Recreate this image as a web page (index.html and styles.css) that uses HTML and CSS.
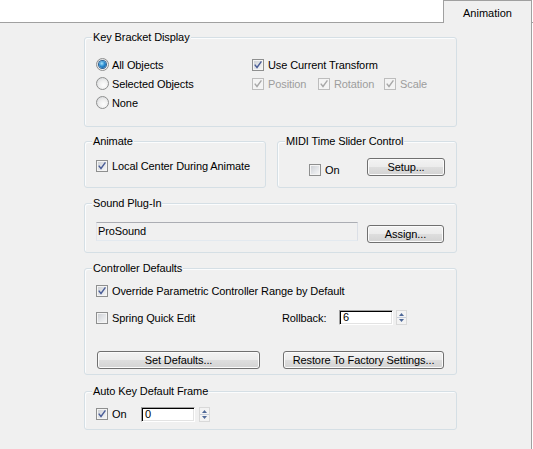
FILE: index.html
```html
<!DOCTYPE html>
<html>
<head>
<meta charset="utf-8">
<link rel="stylesheet" href="styles.css">
</head>
<body>
<div class="tabbar"><div class="tab">Animation</div></div>
<div class="panel">
  <div class="groups">
    <section class="group kbd">
      <span class="gtitle">Key Bracket Display</span>
      <div class="kbd-cols">
        <div class="col-left">
          <div class="opt"><span class="radio on"></span>All Objects</div>
          <div class="opt"><span class="radio"></span>Selected Objects</div>
          <div class="opt"><span class="radio"></span>None</div>
        </div>
        <div class="col-right">
          <div class="opt"><span class="cb"><svg viewBox="0 0 12 12" class="chk"><path d="M2.6 6.2 L4.8 9 L9.6 2.4"/></svg></span>Use Current Transform</div>
          <div class="row-three">
            <div class="opt dis w66"><span class="cb"><svg viewBox="0 0 12 12" class="chk"><path d="M2.6 6.2 L4.8 9 L9.6 2.4"/></svg></span>Position</div>
            <div class="opt dis w66"><span class="cb"><svg viewBox="0 0 12 12" class="chk"><path d="M2.6 6.2 L4.8 9 L9.6 2.4"/></svg></span>Rotation</div>
            <div class="opt dis"><span class="cb"><svg viewBox="0 0 12 12" class="chk"><path d="M2.6 6.2 L4.8 9 L9.6 2.4"/></svg></span>Scale</div>
          </div>
        </div>
      </div>
    </section>

    <div class="pair">
      <section class="group animate">
        <span class="gtitle">Animate</span>
        <div class="opt"><span class="cb"><svg viewBox="0 0 12 12" class="chk"><path d="M2.6 6.2 L4.8 9 L9.6 2.4"/></svg></span>Local Center During Animate</div>
      </section>
      <section class="group midi">
        <span class="gtitle">MIDI Time Slider Control</span>
        <div class="midi-row">
          <div class="opt midi-on"><span class="cb"></span>On</div>
          <div class="btn btn-setup">Setup...</div>
        </div>
      </section>
    </div>

    <section class="group sound">
      <span class="gtitle">Sound Plug-In</span>
      <div class="sound-row">
        <div class="field-ro">ProSound</div>
        <div class="btn btn-assign">Assign...</div>
      </div>
    </section>

    <section class="group ctrl">
      <span class="gtitle">Controller Defaults</span>
      <div class="opt"><span class="cb"><svg viewBox="0 0 12 12" class="chk"><path d="M2.6 6.2 L4.8 9 L9.6 2.4"/></svg></span>Override Parametric Controller Range by Default</div>
      <div class="ctrl-row2">
        <div class="opt spring"><span class="cb"></span>Spring Quick Edit</div>
        <div class="rb-label">Rollback:</div>
        <div class="num rb-field">6</div>
        <span class="spin"><svg viewBox="0 0 11 15" width="11" height="15"><rect x="0.5" y="0.5" width="10" height="14" fill="#f3f3f3" stroke="#d9d9d9"/><path d="M3 6 L5.5 3 L8 6 Z" fill="#4e6898"/><line x1="1" y1="7.5" x2="10" y2="7.5" stroke="#c8cfdc"/><path d="M3 9 L8 9 L5.5 12 Z" fill="#4e6898"/></svg></span>
      </div>
      <div class="ctrl-btns">
        <div class="btn btn-set">Set Defaults...</div>
        <div class="btn btn-restore">Restore To Factory Settings...</div>
      </div>
    </section>

    <section class="group autokey">
      <span class="gtitle">Auto Key Default Frame</span>
      <div class="auto-row">
        <div class="opt auto-on"><span class="cb"><svg viewBox="0 0 12 12" class="chk"><path d="M2.6 6.2 L4.8 9 L9.6 2.4"/></svg></span>On</div>
        <div class="num auto-field">0</div>
        <span class="spin"><svg viewBox="0 0 11 15" width="11" height="15"><rect x="0.5" y="0.5" width="10" height="14" fill="#f3f3f3" stroke="#d9d9d9"/><path d="M3 6 L5.5 3 L8 6 Z" fill="#4e6898"/><line x1="1" y1="7.5" x2="10" y2="7.5" stroke="#c8cfdc"/><path d="M3 9 L8 9 L5.5 12 Z" fill="#4e6898"/></svg></span>
      </div>
    </section>
  </div>
</div>
</body>
</html>
```
FILE: styles.css
```css
* { box-sizing: border-box; }
html, body { margin: 0; padding: 0; }
body {
  width: 533px;
  height: 449px;
  overflow: hidden;
  background: #ffffff;
  font-family: "Liberation Sans", Arial, sans-serif;
  font-size: 11px;
  letter-spacing: -0.1px;
  color: #000;
}

.tabbar {
  height: 23px;
  border-bottom: 1px solid #a0a0a0;
  display: flex;
  align-items: flex-start;
}
.tab {
  margin-left: 443px;
  width: 89px;
  height: 23px;
  background: #f0f0f0;
  border: 1px solid #a0a0a0;
  border-bottom: none;
  display: flex;
  align-items: center;
  justify-content: center;
  padding-top: 1px;
  letter-spacing: 0;
}

.panel {
  width: 532px;
  height: 426px;
  background: #f0f0f0;
  border-right: 1px solid #a0a0a0;
}
.groups {
  padding-top: 14px;
  margin-left: 84px;
  width: 373px;
  display: flex;
  flex-direction: column;
}

.group {
  position: relative;
  border: 1px solid #d5dfe5;
  border-radius: 3px;
  box-shadow: inset 1px 1px 0 #fbfcfd;
  padding-left: 11px;
}
.gtitle {
  position: absolute;
  top: -7px;
  left: 7px;
  padding: 0 1px;
  line-height: 13px;
  background: #f0f0f0;
  white-space: nowrap;
}

.opt {
  display: flex;
  align-items: center;
  height: 19px;
  white-space: nowrap;
}
.opt.dis { color: #9d9d9d; }
.w66 { width: 66px; }

.radio {
  width: 13px;
  height: 13px;
  border-radius: 50%;
  border: 1px solid #8e8f8f;
  background: radial-gradient(circle at 60% 65%, #fdfdfd 0%, #efefef 45%, #cfd2d5 100%);
  margin-right: 3px;
  display: flex;
  align-items: center;
  justify-content: center;
  flex: none;
}
.radio.on::after {
  content: "";
  width: 7px;
  height: 7px;
  border-radius: 50%;
  background: radial-gradient(circle at 40% 35%, #a9e4fb 0%, #2b8dd2 45%, #0c4a86 100%);
  box-shadow: 0 0 0 1px #2a5f93;
}

.cb {
  width: 12px;
  height: 12px;
  border: 1px solid #8e8f8f;
  background: linear-gradient(135deg, #c9ccd1 0%, #e4e6e9 55%, #f8f8f8 100%);
  box-shadow: inset 0 0 0 1px #f4f4f4;
  margin-right: 4px;
  flex: none;
  display: flex;
  align-items: center;
  justify-content: center;
}
.chk { width: 10px; height: 10px; }
.chk path {
  fill: none;
  stroke: #4a5d97;
  stroke-width: 1.7;
  stroke-linecap: square;
}
.dis .cb {
  border-color: #bdbdbd;
  background: #f4f4f4;
  box-shadow: none;
}
.dis .chk path { stroke: #a8a8a8; }

.btn {
  height: 18px;
  border: 1px solid #707070;
  border-radius: 3px;
  background: linear-gradient(#f3f3f3 0%, #ececec 48%, #dedede 52%, #d3d3d3 100%);
  box-shadow: inset 0 0 0 1px #fbfbfb;
  display: flex;
  align-items: center;
  justify-content: center;
  white-space: nowrap;
  flex: none;
}

/* Key Bracket Display */
.kbd { height: 90px; padding-top: 17px; }
.kbd-cols { display: flex; }
.col-left { width: 156px; }
.row-three { display: flex; }

/* Animate / MIDI */
.pair { display: flex; gap: 11px; margin-top: 14px; }
.animate { width: 182px; height: 47px; padding-top: 14px; }
.midi { width: 180px; height: 47px; padding-top: 16px; padding-left: 31px; }
.midi-row { display: flex; align-items: flex-end; height: 18px; }
.midi-on { width: 58px; height: 13px; }
.btn-setup { width: 78px; align-self: flex-start; }

/* Sound */
.sound { margin-top: 15px; height: 50px; padding-top: 18px; }
.sound-row { display: flex; align-items: flex-start; }
.field-ro {
  width: 262px;
  height: 19px;
  border: 1px solid #abadb3;
  border-color: #abadb3 #dbdfe6 #e3e9ef #e2e3ea;
  background: #f0f0f0;
  padding-left: 1px;
  line-height: 17px;
}
.btn-assign { width: 77px; margin-left: 9px; margin-top: 3px; }

/* Controller defaults */
.ctrl { margin-top: 15px; height: 107px; padding-top: 12px; }
.ctrl-row2 { display: flex; align-items: center; height: 19px; margin-top: 8px; }
.spring { width: 186px; }
.rb-label { width: 57px; }
.num {
  height: 15px;
  background: #fff;
  border-top: 1px solid #a0a0a0;
  border-left: 1px solid #a0a0a0;
  border-right: 1px solid #ffffff;
  border-bottom: 1px solid #ffffff;
  box-shadow: inset 1px 1px 0 #000, inset -1px -1px 0 #e3e3e3;
  padding-left: 3px;
  line-height: 13px;
}
.rb-field { width: 54px; }
.spin { display: flex; margin-left: 3px; }
.ctrl-btns { display: flex; margin-top: 24px; padding-left: 1px; gap: 23px; }
.btn-set { width: 163px; }
.btn-restore { width: 161px; }

/* Auto key */
.autokey { margin-top: 16px; height: 39px; padding-top: 14px; }
.auto-row { display: flex; align-items: center; height: 16px; }
.auto-on { width: 45px; }
.auto-field { width: 54px; }
.auto-row .spin { margin-left: 4px; }
```
